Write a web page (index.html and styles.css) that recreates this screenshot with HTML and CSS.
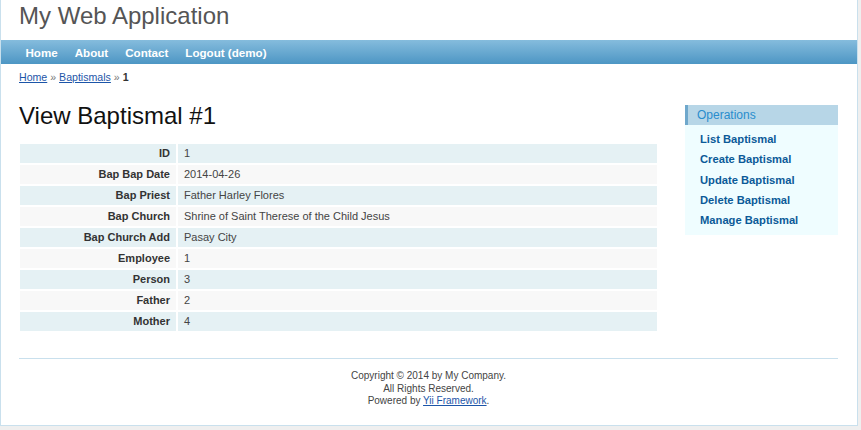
FILE: index.html
```html
<!DOCTYPE html>
<html lang="en">
<head>
<meta charset="utf-8">
<title>My Web Application - View Baptismal</title>
<link rel="stylesheet" href="styles.css">
</head>
<body>
<div class="page">
  <div class="header"><div class="logo">My Web Application</div></div>
  <div class="mainmenu">
    <ul>
      <li><a href="#">Home</a></li>
      <li><a href="#">About</a></li>
      <li><a href="#">Contact</a></li>
      <li><a href="#">Logout (demo)</a></li>
    </ul>
  </div>
  <div class="breadcrumbs"><a href="#">Home</a> <span class="sep">&raquo;</span> <a href="#">Baptismals</a> <span class="sep">&raquo;</span> <span class="current">1</span></div>
  <div class="columns">
    <div class="main">
      <h1>View Baptismal #1</h1>
      <table class="detail-view">
        <tr class="odd"><th>ID</th><td>1</td></tr>
        <tr class="even"><th>Bap Bap Date</th><td>2014-04-26</td></tr>
        <tr class="odd"><th>Bap Priest</th><td>Father Harley Flores</td></tr>
        <tr class="even"><th>Bap Church</th><td>Shrine of Saint Therese of the Child Jesus</td></tr>
        <tr class="odd"><th>Bap Church Add</th><td>Pasay City</td></tr>
        <tr class="even"><th>Employee</th><td>1</td></tr>
        <tr class="odd"><th>Person</th><td>3</td></tr>
        <tr class="even"><th>Father</th><td>2</td></tr>
        <tr class="odd"><th>Mother</th><td>4</td></tr>
      </table>
    </div>
    <div class="sidebar">
      <div class="portlet">
        <div class="portlet-decoration"><div class="portlet-title">Operations</div></div>
        <ul class="operations">
          <li><a href="#">List Baptismal</a></li>
          <li><a href="#">Create Baptismal</a></li>
          <li><a href="#">Update Baptismal</a></li>
          <li><a href="#">Delete Baptismal</a></li>
          <li><a href="#">Manage Baptismal</a></li>
        </ul>
      </div>
    </div>
  </div>
  <div class="footer">
    Copyright &copy; 2014 by My Company.<br>
    All Rights Reserved.<br>
    Powered by <a href="#">Yii Framework</a>.
  </div>
</div>
</body>
</html>
```
FILE: styles.css
```css
html, body {
  margin: 0;
  padding: 0;
}
body {
  background: #efefef;
  font-family: "Liberation Sans", Arial, Helvetica, sans-serif;
  color: #333;
}
.page {
  width: 856px;
  background: #fff;
  border-left: 1px solid #c9e0ed;
  border-right: 1px solid #c9e0ed;
  border-bottom: 1px solid #c9e0ed;
}
.header {
  height: 40px;
}
.logo {
  padding-left: 18px;
  font-size: 24px;
  line-height: 32px;
  color: #555;
}
.mainmenu {
  height: 24px;
  background: linear-gradient(#85bcdd, #4d96c4);
}
.mainmenu ul {
  list-style: none;
  margin: 0;
  padding: 0 0 0 16px;
  display: flex;
}
.mainmenu a {
  display: block;
  padding: 1px 8.5px 0;
  line-height: 23px;
  font-size: 11.6px;
  font-weight: bold;
  color: #fff;
  text-decoration: none;
}
.breadcrumbs {
  padding: 6px 0 4px 18px;
  font-size: 10.6px;
  line-height: 14px;
  color: #333;
}
.breadcrumbs a {
  color: #1c55a8;
}
.breadcrumbs .sep {
  color: #777;
}
.breadcrumbs .current {
  font-weight: bold;
}
.columns {
  display: flex;
  align-items: flex-start;
  padding: 0 19px 0 18px;
}
.main {
  width: 639px;
}
h1 {
  margin: 14px 0 13px 0;
  font-size: 24px;
  line-height: 28px;
  font-weight: normal;
  color: #111;
}
.detail-view {
  width: 639px;
  border-collapse: separate;
  border-spacing: 0;
  font-size: 11px;
}
.detail-view th,
.detail-view td {
  border: 1px solid #fff;
  padding: 2px 6px;
  line-height: 15px;
  height: 15px;
  vertical-align: top;
}
.detail-view th {
  width: 144px;
  text-align: right;
  font-weight: bold;
  color: #333;
}
.detail-view td {
  color: #444;
  text-align: left;
}
.detail-view tr.odd {
  background: #e5f1f4;
}
.detail-view tr.even {
  background: #f8f8f8;
}
.sidebar {
  width: 153px;
  margin: 17px 0 0 27px;
}
.portlet {
  background: #effdff;
}
.portlet-decoration {
  background: #b7d6e7;
  border-left: 3px solid #6fa8cc;
  padding: 3px 9px;
}
.portlet-title {
  font-size: 12px;
  line-height: 14px;
  color: #298dcd;
}
.operations {
  list-style: none;
  margin: 0;
  padding: 4px 0 5px 15px;
}
.operations li {
  display: block;
  height: 20.25px;
  font-size: 11.2px;
  line-height: 20.25px;
}
.operations a {
  font-weight: bold;
  color: #0b5a98;
  text-decoration: none;
}
.footer {
  margin: 26px 19px 0 18px;
  border-top: 1px solid #c9e0ed;
  padding: 11px 0 17px;
  text-align: center;
  font-size: 10px;
  line-height: 12.6px;
  color: #444;
}
.footer a {
  color: #1c55a8;
}
```
